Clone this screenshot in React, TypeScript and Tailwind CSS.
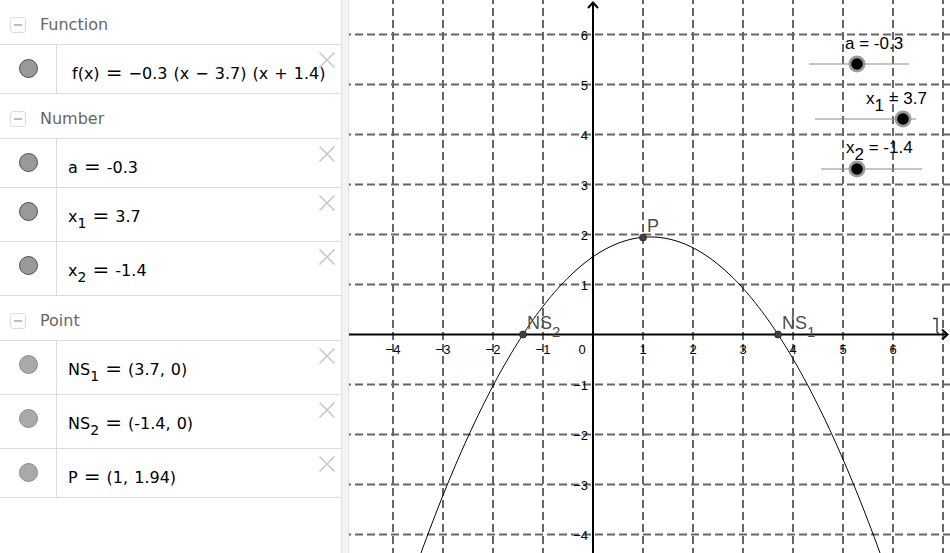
import React from "react";

const FONT_ALG = { fontFamily: '"DejaVu Sans", sans-serif' };

function CollapseIcon() {
  return (
    <div className="w-[16px] h-[16px] rounded-[3px] border border-[#dddddd] flex items-center justify-center">
      <div className="w-[8px] h-[1.5px] bg-[#bdbdbd]" />
    </div>
  );
}

function CloseIcon() {
  return (
    <svg width="18" height="18" viewBox="0 0 18 18" className="absolute right-[5px] top-[6px]">
      <path d="M1.5 1.5 L16.5 16.5 M16.5 1.5 L1.5 16.5" stroke="#c8c8c8" strokeWidth="1.6" fill="none" />
    </svg>
  );
}

function Header({ label }: { label: string }) {
  return (
    <div className="h-[45px] box-border border-b border-[#dcdcdc] flex items-center pt-[6px] pl-[10px] gap-[14px]">
      <CollapseIcon />
      <span className="text-[16px] text-[#666666]" style={FONT_ALG}>{label}</span>
    </div>
  );
}

function Row({ h, point, pl, children }: { h: string; point?: boolean; pl?: string; children: React.ReactNode }) {
  return (
    <div className={`${h} box-border border-b border-[#dcdcdc] flex relative`}>
      <div className="w-[57px] box-border border-r border-[#dcdcdc] flex justify-center pt-[14px]">
        {point ? (
          <div className="w-[19px] h-[19px] rounded-full bg-[#a9a9a9] border border-[#8c8c8c]" />
        ) : (
          <div className="w-[19px] h-[19px] rounded-full bg-[#999999] border-[1.5px] border-[#505050]" />
        )}
      </div>
      <div className={`${pl ?? "pl-[11px]"} pt-[17px] text-[16px] leading-[20px] text-black whitespace-nowrap [word-spacing:1px]`} style={FONT_ALG}>
        {children}
      </div>
      <CloseIcon />
    </div>
  );
}

function Sub({ children }: { children: React.ReactNode }) {
  return <span className="text-[14px] relative top-[6px] leading-none">{children}</span>;
}

function Eq() {
  return (
    <>
      {" "}
      <span className="text-[20px] leading-none">=</span>{" "}
    </>
  );
}

function Graph() {
  const ox = 593;
  const oy = 334.5;
  const u = 50;
  const vx: number[] = [];
  for (let k = -4; k <= 7; k++) if (k !== 0) vx.push(ox + u * k);
  const hy: number[] = [];
  for (let k = -4; k <= 6; k++) if (k !== 0) hy.push(oy - u * k);
  const f = (x: number) => -0.3 * (x - 3.7) * (x + 1.4);
  const pts: string[] = [];
  for (let x = -4.2; x <= 6.8; x += 0.02) {
    pts.push(`${(ox + u * x).toFixed(2)},${(oy - u * f(x)).toFixed(2)}`);
  }
  const curve = "M" + pts.join(" L");
  const xLabels = [-4, -3, -2, -1, 1, 2, 3, 4, 5, 6];
  const yLabels = [6, 5, 4, 3, 2, 1, -1, -2, -3, -4];
  const lab = (n: number) => (n < 0 ? "\u2212" + Math.abs(n) : String(n));
  const font = "Liberation Sans, Arial, sans-serif";
  return (
    <svg width="601" height="553" viewBox="349 0 601 553" className="block">
      <rect x="349" y="0" width="601" height="553" fill="#ffffff" />
      {vx.map((x) => (
        <line key={"v" + x} x1={x} y1={0} x2={x} y2={553} stroke="#666666" strokeWidth="2" strokeDasharray="8 4" strokeDashoffset="4" />
      ))}
      {hy.map((y) => (
        <line key={"h" + y} x1={349} y1={y} x2={950} y2={y} stroke="#666666" strokeWidth="2" strokeDasharray="8 4" strokeDashoffset="6" />
      ))}
      {/* axes */}
      <line x1={ox} y1={553} x2={ox} y2={2.5} stroke="#000" strokeWidth="2" />
      <line x1={349} y1={oy} x2={947.5} y2={oy} stroke="#000" strokeWidth="2" />
      <path d="M588 8 L593 2.5 L598 8" stroke="#000" strokeWidth="2" fill="none" />
      <path d="M942 329.5 L947.5 334.5 L942 339.5" stroke="#000" strokeWidth="2" fill="none" />
      <path d="M933 318.5 H937 V332 L939 334" stroke="#333" strokeWidth="1.4" fill="none" />
      {/* tick labels */}
      <g fontFamily={font} fontSize="13" fill="#000">
        {xLabels.map((n) => (
          <text key={"xl" + n} x={ox + u * n} y={354} textAnchor="middle">{lab(n)}</text>
        ))}
        <text x={582} y={354} textAnchor="middle">0</text>
        {yLabels.map((n) => (
          <text key={"yl" + n} x={588} y={oy - u * n + 5} textAnchor="end">{lab(n)}</text>
        ))}
      </g>
      {/* curve */}
      <path d={curve} stroke="#000" strokeWidth="1" fill="none" />
      {/* points */}
      <g fill="#404040" stroke="#222" strokeWidth="0.8">
        <circle cx={643} cy={oy - u * 1.94} r={3.5} />
        <circle cx={ox + u * -1.4} cy={oy} r={3.5} />
        <circle cx={ox + u * 3.7} cy={oy} r={3.5} />
      </g>
      <g fontFamily={font} fontSize="18" fill="#4d4d4d">
        <text x={647} y={232}>P</text>
        <text x={527} y={329}>NS<tspan fontSize="15" dy="8">2</tspan></text>
        <text x={782} y={329}>NS<tspan fontSize="15" dy="8">1</tspan></text>
      </g>
      {/* sliders */}
      <g stroke="#8a8a8a" strokeWidth="1">
        <line x1={809} y1={64} x2={909} y2={64} />
        <line x1={815} y1={119} x2={916} y2={119} />
        <line x1={821} y1={169} x2={922} y2={169} />
      </g>
      {[
        [857, 64],
        [903, 119],
        [857, 169],
      ].map(([cx, cy]) => (
        <g key={"s" + cx + cy}>
          <circle cx={cx} cy={cy} r={8.5} fill="#9a9a9a" />
          <circle cx={cx} cy={cy} r={5.8} fill="#000" />
        </g>
      ))}
      <g fontFamily={font} fontSize="17" fill="#000">
        <text x={845} y={49}>a = -0.3</text>
        <text x={866} y={104}>x<tspan fontSize="17" dy="7">1</tspan><tspan dy="-7"> = 3.7</tspan></text>
        <text x={846} y={153}>x<tspan fontSize="17" dy="7">2</tspan><tspan dy="-7"> = -1.4</tspan></text>
      </g>
    </svg>
  );
}

export default function App() {
  return (
    <div className="w-[950px] h-[553px] flex bg-white overflow-hidden">
      <div className="w-[341px] flex flex-col bg-white">
        <Header label="Function" />
        <Row h="h-[49px]" pl="pl-[15px]">
          f(x)<Eq />−0.3 (x − 3.7) (x + 1.4)
        </Row>
        <Header label="Number" />
        <Row h="h-[49px]">
          a<Eq />-0.3
        </Row>
        <Row h="h-[54px]">
          x<Sub>1</Sub>
          <Eq />3.7
        </Row>
        <Row h="h-[54px]">
          x<Sub>2</Sub>
          <Eq />-1.4
        </Row>
        <Header label="Point" />
        <Row h="h-[54px]" point>
          NS<Sub>1</Sub>
          <Eq />(3.7, 0)
        </Row>
        <Row h="h-[54px]" point>
          NS<Sub>2</Sub>
          <Eq />(-1.4, 0)
        </Row>
        <Row h="h-[49px]" point>
          P<Eq />(1, 1.94)
        </Row>
      </div>
      <div className="w-[8px] box-border bg-[#f3f3f3] border-l border-r border-[#e2e2e2]" />
      <div className="flex-1">
        <Graph />
      </div>
    </div>
  );
}
